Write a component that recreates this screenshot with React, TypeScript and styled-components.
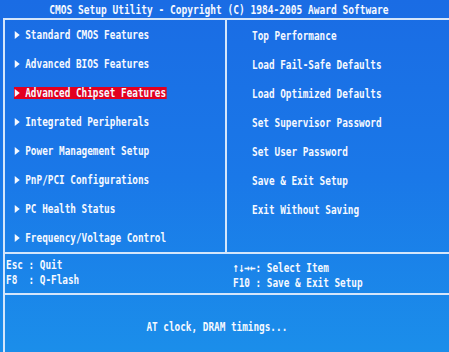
import styled, { createGlobalStyle, css } from 'styled-components'

const GlobalStyle = createGlobalStyle`
  html, body {
    margin: 0;
    padding: 0;
    background: #1a6de2;
  }
`

const LINE = '#d4e6fb'

const Screen = styled.div`
  width: 449px;
  height: 352px;
  overflow: hidden;
  background: linear-gradient(180deg, #1a6ce4 0%, #1a78e8 50%, #1b8eea 100%);
  color: #f6f9ff;
  font-family: 'DejaVu Sans Mono', 'Liberation Mono', monospace;
  font-weight: 700;
  font-size: 13px;
  display: flex;
  flex-direction: column;
`

const Mono = styled.span<{ $origin?: string; $scale?: number }>`
  display: inline-block;
  white-space: pre;
  line-height: 15px;
  transform: scaleX(${(p) => p.$scale || 0.72});
  transform-origin: ${(p) => p.$origin || 'left center'};
`

const TitleBar = styled.div`
  height: 18px;
  display: flex;
  justify-content: center;
  align-items: center;
  padding-right: 12px;
  padding-top: 1px;
  box-sizing: border-box;
`

const Frame = styled.div`
  flex: 1;
  margin-left: 3px;
  border-left: 2px solid ${LINE};
  border-top: 2px solid ${LINE};
  display: flex;
  flex-direction: column;
`

const MenuGrid = styled.div`
  display: grid;
  grid-template-columns: 222px 1fr;
  height: 232px;
`

const Column = styled.div<{ $divider?: boolean; $pad: number }>`
  display: flex;
  flex-direction: column;
  padding-left: ${(p) => p.$pad}px;
  ${(p) =>
    p.$divider &&
    css`
      border-right: 2px solid ${LINE};
    `}
`

const Row = styled.div<{ $shift?: number }>`
  height: 29px;
  display: flex;
  align-items: center;
  padding-top: ${(p) => p.$shift || 0}px;
  box-sizing: border-box;
`

const Item = styled.span<{ $active?: boolean }>`
  display: inline-flex;
  align-items: center;
  height: 12px;
  white-space: pre;
  transform: scaleX(0.72);
  transform-origin: left center;
  padding-right: 1px;
  ${(p) =>
    p.$active &&
    css`
      background: #e2001f;
    `}
`

const Arrow = styled.span`
  width: 0;
  height: 0;
  margin-left: 1px;
  margin-right: 7.6px;
  border-left: 7px solid #f6f9ff;
  border-top: 4px solid transparent;
  border-bottom: 4px solid transparent;
`

const KeysBar = styled.div`
  height: 39px;
  border-top: 2px solid ${LINE};
  display: grid;
  grid-template-columns: 222px 1fr;
`

const KeyCol = styled.div<{ $top: number; $left: number }>`
  display: flex;
  flex-direction: column;
  padding-top: ${(p) => p.$top}px;
  padding-left: ${(p) => p.$left}px;
`

const StatusBar = styled.div`
  flex: 1;
  border-top: 2px solid ${LINE};
  display: flex;
  justify-content: center;
  align-items: flex-start;
  padding-top: 24px;
  padding-right: 20px;
`

const leftMenu = [
  'Standard CMOS Features',
  'Advanced BIOS Features',
  'Advanced Chipset Features',
  'Integrated Peripherals',
  'Power Management Setup',
  'PnP/PCI Configurations',
  'PC Health Status',
  'Frequency/Voltage Control',
]

const rightMenu = [
  'Top Performance',
  'Load Fail-Safe Defaults',
  'Load Optimized Defaults',
  'Set Supervisor Password',
  'Set User Password',
  'Save & Exit Setup',
  'Exit Without Saving',
]

const selected = 2

export default function App() {
  return (
    <>
      <GlobalStyle />
      <Screen>
        <TitleBar>
          <Mono $origin="center" $scale={0.735}>
            CMOS Setup Utility - Copyright (C) 1984-2005 Award Software
          </Mono>
        </TitleBar>
        <Frame>
          <MenuGrid>
            <Column $divider $pad={9}>
              {leftMenu.map((label, i) => (
                <Row key={label}>
                  <Item $active={i === selected}>
                    <Arrow />
                    {label}
                  </Item>
                </Row>
              ))}
            </Column>
            <Column $pad={25}>
              {rightMenu.map((label) => (
                <Row key={label} $shift={2}>
                  <Mono>{label}</Mono>
                </Row>
              ))}
            </Column>
          </MenuGrid>
          <KeysBar>
            <KeyCol $top={3} $left={1}>
              <Mono>Esc : Quit</Mono>
              <Mono>F8  : Q-Flash</Mono>
            </KeyCol>
            <KeyCol $top={6} $left={6}>
              <Mono>↑↓→←: Select Item</Mono>
              <Mono>F10 : Save & Exit Setup</Mono>
            </KeyCol>
          </KeysBar>
          <StatusBar>
            <Mono $origin="center">AT clock, DRAM timings...</Mono>
          </StatusBar>
        </Frame>
      </Screen>
    </>
  )
}
